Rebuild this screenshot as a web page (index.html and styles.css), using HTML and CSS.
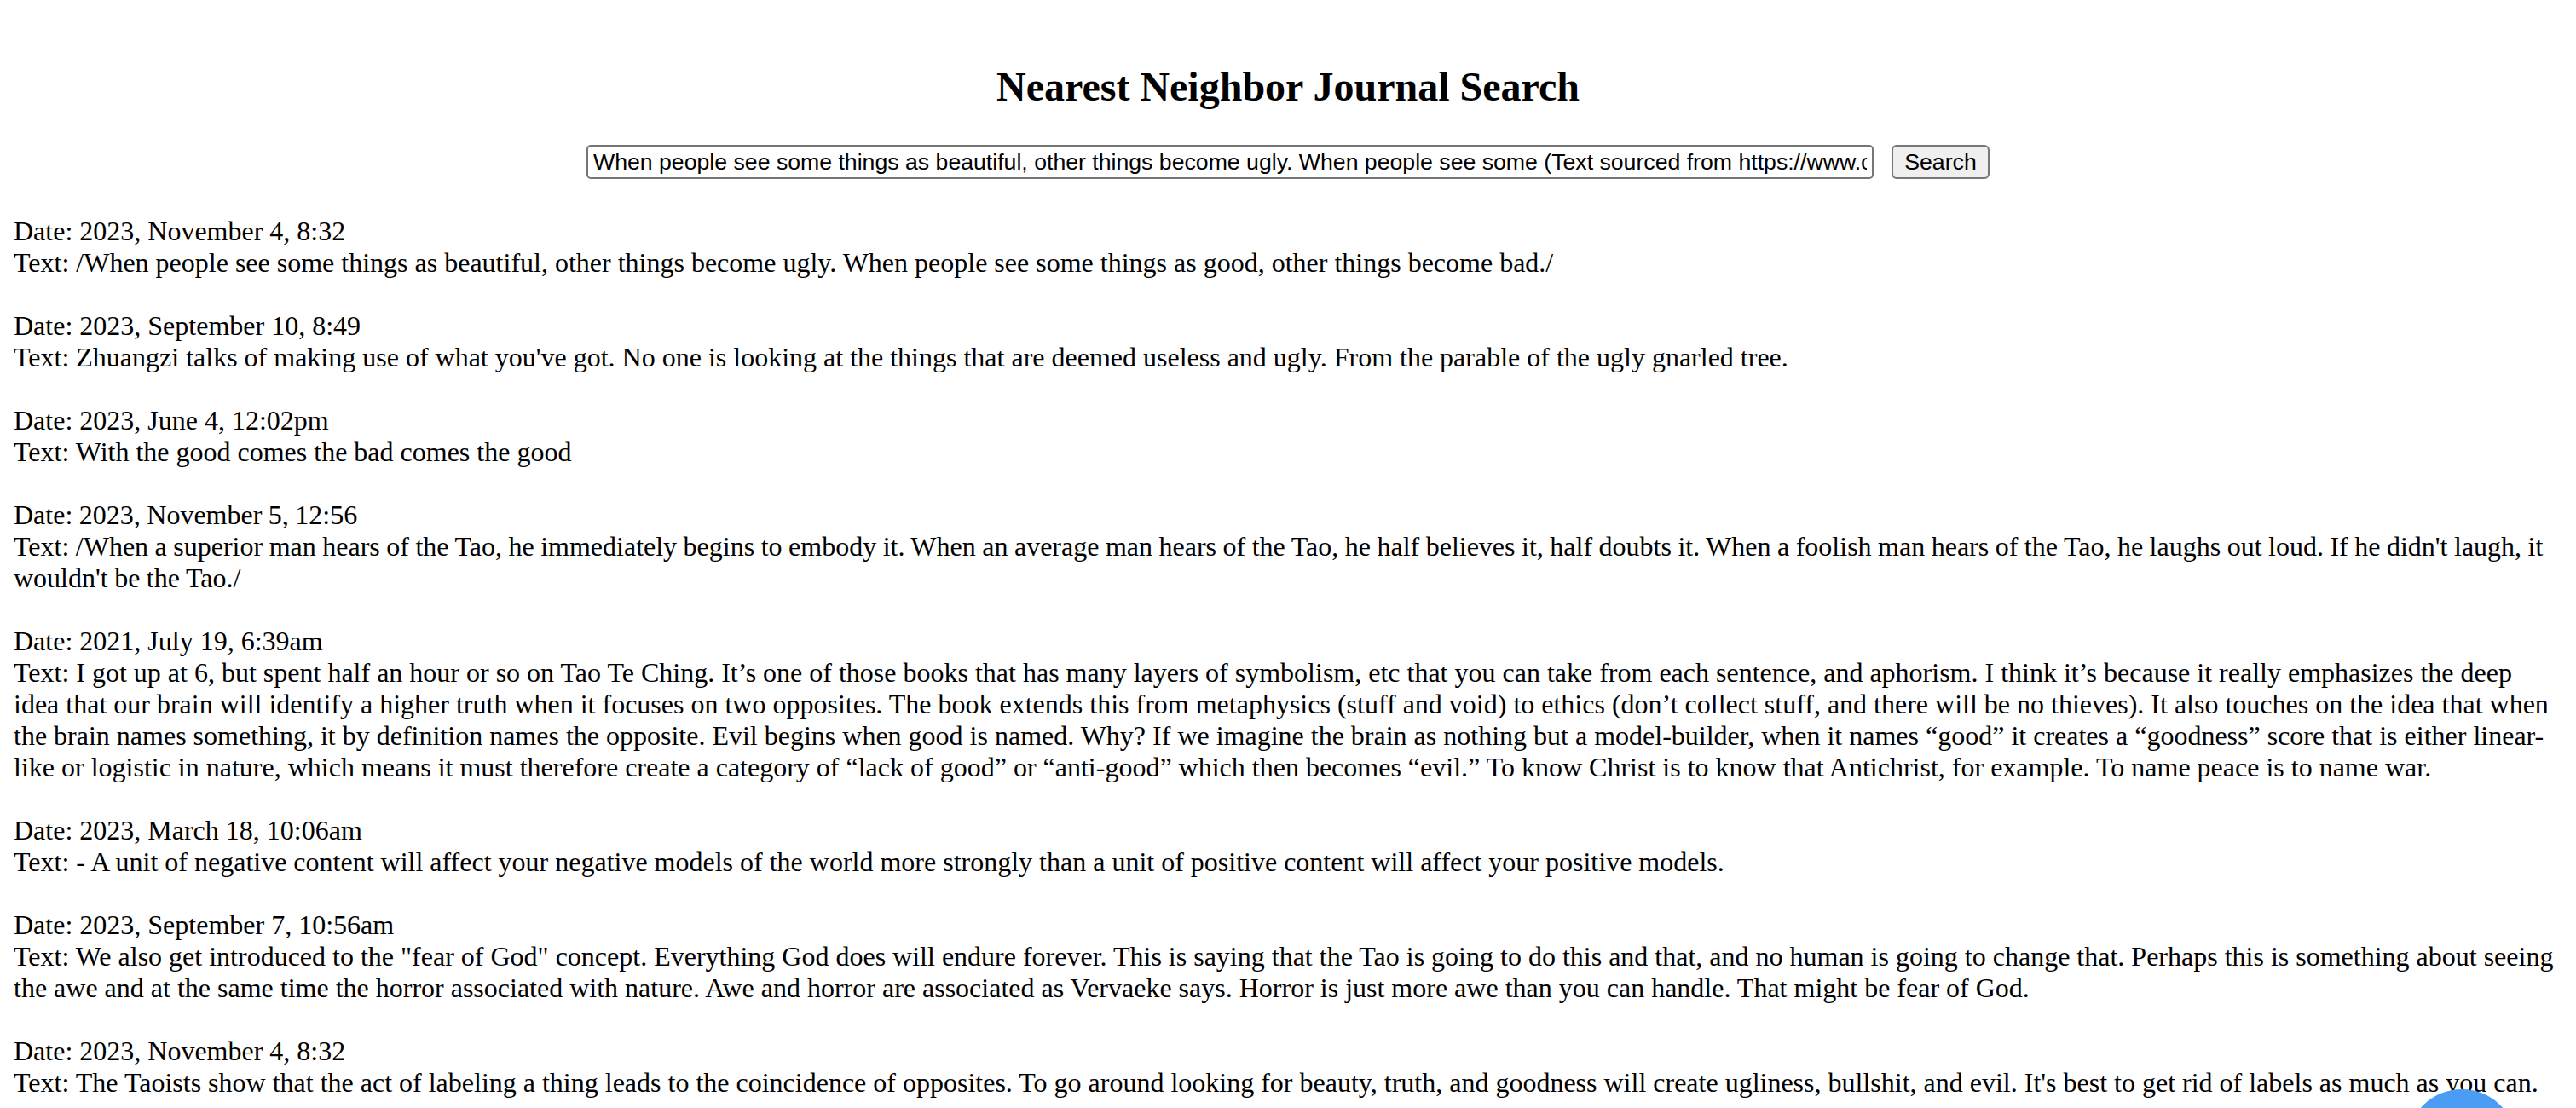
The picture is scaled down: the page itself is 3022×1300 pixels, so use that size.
FILE: index.html
```html
<!DOCTYPE html>
<html lang="en">
<head>
<meta charset="utf-8">
<title>Nearest Neighbor Journal Search</title>
<link rel="stylesheet" href="styles.css">
</head>
<body>
<div class="page">
  <h2 class="title">Nearest Neighbor Journal Search</h2>
  <form class="search" onsubmit="return false;">
    <input class="search-input" type="text" value="When people see some things as beautiful, other things become ugly. When people see some (Text sourced from https://www.cliffsnotes.com/literature/t/tao-te-ching)">
    <button class="search-button" type="submit">Search</button>
  </form>
  <div class="results">
    <p class="entry">Date: 2023, November 4, 8:32<br>Text: /When people see some things as beautiful, other things become ugly. When people see some things as good, other things become bad./</p>
    <p class="entry">Date: 2023, September 10, 8:49<br>Text: Zhuangzi talks of making use of what you've got. No one is looking at the things that are deemed useless and ugly. From the parable of the ugly gnarled tree.</p>
    <p class="entry">Date: 2023, June 4, 12:02pm<br>Text: With the good comes the bad comes the good</p>
    <p class="entry entry-tight">Date: 2023, November 5, 12:56<br>Text: /When a superior man hears of the Tao, he immediately begins to embody it. When an average man hears of the Tao, he half believes it, half doubts it. When a foolish man hears of the Tao, he laughs out loud. If he didn't laugh, it wouldn't be the Tao./</p>
    <p class="entry">Date: 2021, July 19, 6:39am<br>Text: I got up at 6, but spent half an hour or so on Tao Te Ching. It’s one of those books that has many layers of symbolism, etc that you can take from each sentence, and aphorism. I think it’s because it really emphasizes the deep idea that our brain will identify a higher truth when it focuses on two opposites. The book extends this from metaphysics (stuff and void) to ethics (don’t collect stuff, and there will be no thieves). It also touches on the idea that when the brain names something, it by definition names the opposite. Evil begins when good is named. Why? If we imagine the brain as nothing but a model-builder, when it names “good” it creates a “goodness” score that is either linear-like or logistic in nature, which means it must therefore create a category of “lack of good” or “anti-good” which then becomes “evil.” To know Christ is to know that Antichrist, for example. To name peace is to name war.</p>
    <p class="entry">Date: 2023, March 18, 10:06am<br>Text: - A unit of negative content will affect your negative models of the world more strongly than a unit of positive content will affect your positive models.</p>
    <p class="entry">Date: 2023, September 7, 10:56am<br>Text: We also get introduced to the "fear of God" concept. Everything God does will endure forever. This is saying that the Tao is going to do this and that, and no human is going to change that. Perhaps this is something about seeing the awe and at the same time the horror associated with nature. Awe and horror are associated as Vervaeke says. Horror is just more awe than you can handle. That might be fear of God.</p>
    <p class="entry">Date: 2023, November 4, 8:32<br>Text: The Taoists show that the act of labeling a thing leads to the coincidence of opposites. To go around looking for beauty, truth, and goodness will create ugliness, bullshit, and evil. It's best to get rid of labels as much as you can.</p>
  </div>
</div>
<div class="chat-bubble"></div>
</body>
</html>
```
FILE: styles.css
```css
html, body {
  margin: 0;
  padding: 0;
  background: #ffffff;
  color: #000000;
}

body {
  font-family: "Liberation Serif", "Times New Roman", serif;
  font-size: 32px;
  line-height: 37px;
  overflow: hidden;
}

.page {
  padding: 0 16px;
}

.title {
  margin: 74px 0 0;
  font-size: 48px;
  line-height: 55px;
  font-weight: bold;
  text-align: center;
}

.search {
  margin: 41px 0 0;
  display: flex;
  justify-content: center;
  align-items: center;
  gap: 21px;
}

.search-input {
  box-sizing: border-box;
  width: 1510px;
  height: 40px;
  padding: 2px 6px;
  border: 2px solid #767676;
  border-radius: 5px;
  font-family: "Liberation Sans", Arial, sans-serif;
  font-size: 26.67px;
  color: #000;
  background: #fff;
  outline: none;
}

.search-button {
  box-sizing: border-box;
  height: 40px;
  width: 115px;
  padding: 2px 12px;
  border: 2px solid #767676;
  border-radius: 6px;
  background: #efefef;
  font-family: "Liberation Sans", Arial, sans-serif;
  font-size: 26.67px;
  color: #000;
}

.results {
  margin-top: 43px;
}

.entry {
  margin: 0 0 37px;
}

.entry-tight {
  word-spacing: -0.5px;
}

.chat-bubble {
  position: fixed;
  left: 2824px;
  top: 1278px;
  width: 128px;
  height: 128px;
  border-radius: 50%;
  background: #4a9cf5;
}
```
